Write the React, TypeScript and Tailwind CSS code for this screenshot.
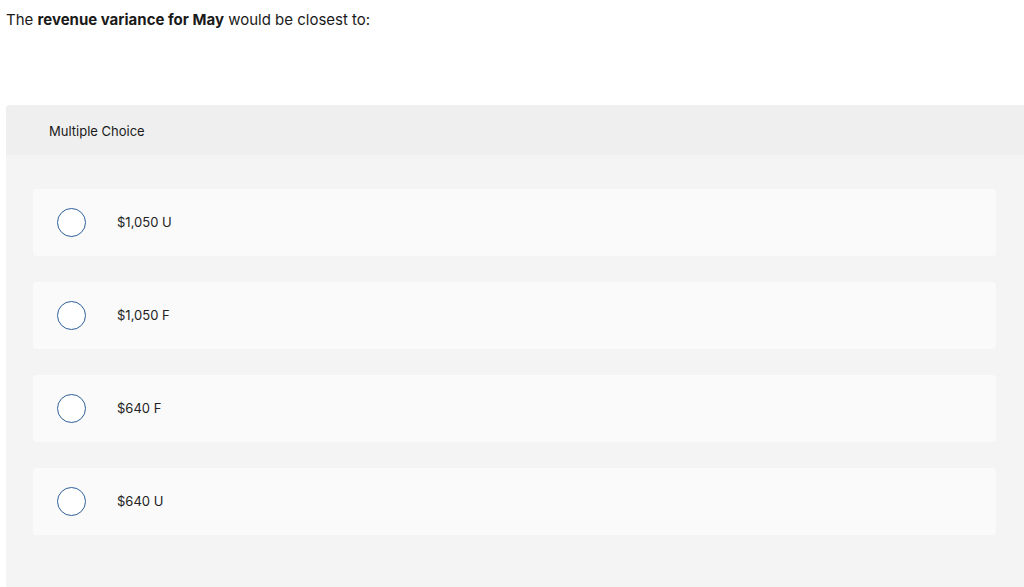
const options = ['$1,050 U', '$1,050 F', '$640 F', '$640 U']

export default function App() {
  return (
    <div className="h-[587px] w-[1024px] overflow-hidden bg-white font-['Inter',sans-serif] text-[#1a1a1a]">
      <p className="pl-[6px] pt-[10px] text-[15px] leading-[20px]">
        The <b className="font-bold">revenue variance for May</b> would be closest to:
      </p>

      <div className="ml-[6px] mt-[75px] w-[1030px] overflow-hidden rounded-tl-[4px] bg-[#f4f4f4]">
        <div className="flex h-[50px] items-center bg-[#efefef] pl-[43px] pt-[3px] text-[13px]">
          Multiple Choice
        </div>

        <div className="flex flex-col gap-[26px] pb-[60px] pl-[27px] pt-[34px]">
          {options.map((opt) => (
            <div
              key={opt}
              className="flex h-[67px] w-[963px] items-center rounded-[4px] bg-[#fafafa]"
            >
              <span className="ml-[24px] h-[29px] w-[29px] rounded-full border-[1.5px] border-[#2d5f9a] bg-white" />
              <span className="ml-[31px] text-[13px] text-[#222]">{opt}</span>
            </div>
          ))}
        </div>
      </div>
    </div>
  )
}
